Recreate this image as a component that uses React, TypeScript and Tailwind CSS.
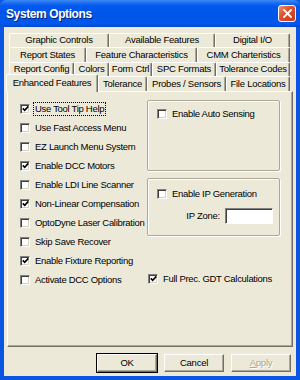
import React from 'react';

const font = "font-['Liberation_Sans',Arial,sans-serif]";

type TabProps = { label: string; w: string; active?: boolean };

const Tab: React.FC<TabProps> = ({ label, w, active }) => (
  <div
    className={`${w} ${
      active ? 'h-[18px] -mb-[1px] relative z-10' : 'h-full'
    } shrink-0 flex items-center justify-center bg-[#ECE9D8] border-t border-l border-white border-r border-r-[#716F64] rounded-t-[2px] shadow-[inset_-1px_0_0_#ACA899] whitespace-nowrap text-[9.5px] tracking-[-0.25px] text-black`}
  >
    {label}
  </div>
);

const Box: React.FC<{ checked?: boolean }> = ({ checked }) => (
  <div className="w-[10px] h-[10px] shrink-0 bg-white border border-t-[#808080] border-l-[#808080] border-b-white border-r-white shadow-[inset_1px_1px_0_#404040,inset_-1px_-1px_0_#D4D0C8] flex items-center justify-center">
    {checked && (
      <svg width="7" height="7" viewBox="0 0 7 7">
        <path d="M0.8 3.4 L2.7 5.3 L6.3 1.4" fill="none" stroke="#000" strokeWidth="1.6" />
      </svg>
    )}
  </div>
);

const Check: React.FC<{ label: string; checked?: boolean; focus?: boolean }> = ({ label, checked, focus }) => (
  <div className="h-[19px] flex items-center gap-[3px]">
    <Box checked={checked} />
    <span
      className={`px-[1px] leading-[12px] border border-dotted ${
        focus ? 'border-black' : 'border-transparent'
      } whitespace-nowrap text-[9.5px] tracking-[-0.3px] text-black`}
    >
      {label}
    </span>
  </div>
);

const Button: React.FC<{ label: React.ReactNode; def?: boolean; disabled?: boolean }> = ({ label, def, disabled }) => (
  <div
    className={`w-[62px] h-[20px] flex items-center justify-center bg-[#ECE9D8] ${
      def ? 'border border-black' : 'border border-transparent'
    }`}
  >
    <div className="w-full h-full flex items-center justify-center border border-t-white border-l-white border-r-[#716F64] border-b-[#716F64] shadow-[inset_-1px_-1px_0_#ACA899] text-[9.5px] tracking-[-0.25px]">
      <span className={disabled ? 'text-[#ACA899] [text-shadow:1px_1px_0_#fff]' : 'text-black'}>{label}</span>
    </div>
  </div>
);

const Group: React.FC<{ h: string; className?: string; children: React.ReactNode }> = ({ h, className, children }) => (
  <div
    className={`${h} ${className ?? ''} border border-[#ACA899] shadow-[inset_1px_1px_0_#fff,1px_1px_0_#fff] rounded-[2px]`}
  >
    {children}
  </div>
);

export default function App() {
  return (
    <div className={`${font} w-[300px] h-[380px] bg-[#0A55E2] flex flex-col`}>
      {/* title bar */}
      <div className="h-[27px] shrink-0 flex items-center justify-between pl-[6px] pr-[4px] rounded-t-[6px] bg-[linear-gradient(to_bottom,#3D8BF5_0%,#1F6FF0_10%,#0058EE_22%,#0055E5_60%,#0058EE_88%,#0046CC_100%)]">
        <span className="text-white font-bold text-[12px] tracking-[-0.4px] [text-shadow:1px_1px_0_#0A1F78]">
          System Options
        </span>
        <div className="w-[18px] h-[17px] rounded-[3px] border border-white bg-[linear-gradient(135deg,#F0907A_0%,#E0522E_40%,#C8381A_100%)] flex items-center justify-center">
          <svg width="9" height="9" viewBox="0 0 9 9">
            <path d="M1 1 L8 8 M8 1 L1 8" stroke="#fff" strokeWidth="1.9" strokeLinecap="square" />
          </svg>
        </div>
      </div>

      {/* client */}
      <div className="flex-1 mx-[4px] mb-[4px] bg-[#ECE9D8] flex flex-col">
        <div className="pt-[6px] flex flex-col">
          <div className="h-[14px] ml-[5px] flex">
            <Tab label="Graphic Controls" w="w-[100px]" />
            <Tab label="Available Features" w="w-[106px]" />
            <Tab label="Digital I/O" w="w-[75px]" />
          </div>
          <div className="h-[15px] ml-[5px] flex">
            <Tab label="Report States" w="w-[77px]" />
            <Tab label="Feature Characteristics" w="w-[111px]" />
            <Tab label="CMM Charteristics" w="w-[93px]" />
          </div>
          <div className="h-[14px] ml-[5px] flex">
            <Tab label="Report Config" w="w-[65px]" />
            <Tab label="Colors" w="w-[35px]" />
            <Tab label="Form Ctrl" w="w-[43px]" />
            <Tab label="SPC Formats" w="w-[64px]" />
            <Tab label="Tolerance Codes" w="w-[74px]" />
          </div>
          <div className="h-[15px] ml-[2px] flex items-end">
            <Tab label="Enhanced Features" w="w-[92px]" active />
            <Tab label="Tolerance" w="w-[49px]" />
            <Tab label="Probes / Sensors" w="w-[79px]" />
            <Tab label="File Locations" w="w-[64px]" />
          </div>
        </div>

        {/* panel */}
        <div className="h-[256px] mx-[3px] border border-t-white border-l-white border-r-[#716F64] border-b-[#716F64] shadow-[inset_-1px_-1px_0_#ACA899] grid grid-cols-[139px_133px]">
          <div className="pl-[12px] pt-[7px] flex flex-col">
            <Check label="Use Tool Tip Help" checked focus />
            <Check label="Use Fast Access Menu" />
            <Check label="EZ Launch Menu System" />
            <Check label="Enable DCC Motors" checked />
            <Check label="Enable LDI Line Scanner" />
            <Check label="Non-Linear Compensation" checked />
            <Check label="OptoDyne Laser Calibration" />
            <Check label="Skip Save Recover" />
            <Check label="Enable Fixture Reporting" checked />
            <Check label="Activate DCC Options" />
          </div>
          <div className="pt-[8px] flex flex-col">
            <Group h="h-[71px]" className="pl-[9px] pt-[3px]">
              <Check label="Enable Auto Sensing" />
            </Group>
            <Group h="h-[58px]" className="mt-[7px] pl-[9px] pt-[5px] flex flex-col">
              <Check label="Enable IP Generation" />
              <div className="mt-[5px] pr-[6px] flex items-center justify-end gap-[5px]">
                <span className="text-[9.5px] tracking-[-0.25px] text-black">IP Zone:</span>
                <div className="w-[48px] h-[16px] bg-white border border-t-[#808080] border-l-[#808080] border-b-white border-r-white shadow-[inset_1px_1px_0_#404040]" />
              </div>
            </Group>
            <div className="mt-[33px] pl-[1px]">
              <Check label="Full Prec. GDT Calculations" checked />
            </div>
          </div>
        </div>

        {/* buttons */}
        <div className="mt-[6px] pr-[4px] flex justify-end gap-[5px]">
          <Button label="OK" def />
          <Button label="Cancel" />
          <Button
            label={
              <>
                <span className="underline">A</span>pply
              </>
            }
            disabled
          />
        </div>
      </div>
    </div>
  );
}
